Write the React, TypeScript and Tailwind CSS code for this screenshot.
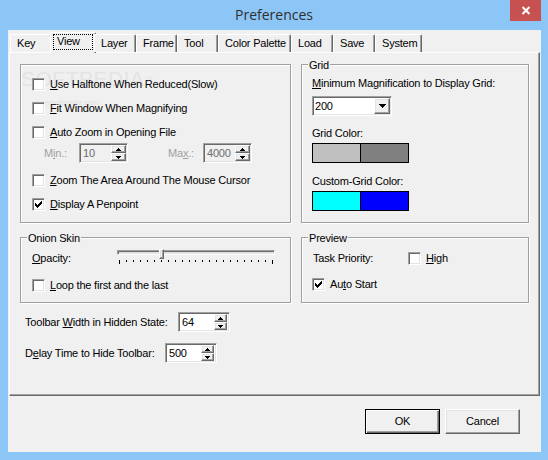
import React from 'react'

// classic win32 bevels
const raised = 'border border-t-white border-l-white border-r-[#696969] border-b-[#696969] shadow-[inset_-1px_-1px_0_#a0a0a0,inset_1px_1px_0_#e3e3e3]'
const sunken = 'border border-t-[#a0a0a0] border-l-[#a0a0a0] border-r-white border-b-white shadow-[inset_1px_1px_0_#696969,inset_-1px_-1px_0_#e3e3e3]'
const etched = 'relative border border-[#a0a0a0] shadow-[inset_1px_1px_0_#fff,1px_1px_0_#fff]'

const Check = ({ checked }: { checked?: boolean }) => (
    <span className={`w-[13px] h-[13px] shrink-0 bg-white flex items-center justify-center ${sunken}`}>
        {checked && (
            <svg width="7" height="7" viewBox="0 0 7 7" shapeRendering="crispEdges">
                <rect x="6" y="0" width="1" height="3" />
                <rect x="5" y="1" width="1" height="3" />
                <rect x="4" y="2" width="1" height="3" />
                <rect x="3" y="3" width="1" height="3" />
                <rect x="2" y="4" width="1" height="3" />
                <rect x="1" y="3" width="1" height="3" />
                <rect x="0" y="2" width="1" height="3" />
            </svg>
        )}
    </span>
)

const CheckRow = ({ label, checked, className }: { label: React.ReactNode, checked?: boolean, className?: string }) => (
    <div className={`flex items-center gap-[5px] ${className ?? ''}`}>
        <Check checked={checked} />
        <span className="whitespace-nowrap">{label}</span>
    </div>
)

const Arrow = ({ dir }: { dir: 'up' | 'down' }) => (
    <svg width="5" height="3" viewBox="0 0 5 3" shapeRendering="crispEdges">
        {dir === 'up' ? (
            <>
                <rect x="2" y="0" width="1" height="1" />
                <rect x="1" y="1" width="3" height="1" />
                <rect x="0" y="2" width="5" height="1" />
            </>
        ) : (
            <>
                <rect x="0" y="0" width="5" height="1" />
                <rect x="1" y="1" width="3" height="1" />
                <rect x="2" y="2" width="1" height="1" />
            </>
        )}
    </svg>
)

const SpinBox = ({ value, w, disabled, flush }: { value: string, w: string, disabled?: boolean, flush?: boolean }) => (
    <div className={`${w} h-[20px] shrink-0 flex p-[1px] ${sunken} ${disabled ? 'bg-[#f0f0f0] text-[#6d6d6d]' : 'bg-white'}`}>
        <span className="flex-1 pl-[2px] flex items-center">{value}</span>
        <div className={`flex flex-col ${flush ? 'w-[15px]' : 'w-[13px] mr-[1px]'}`}>
            <span className={`flex-1 flex items-center justify-center bg-[#f0f0f0] ${raised}`}><Arrow dir="up" /></span>
            <span className={`flex-1 flex items-center justify-center bg-[#f0f0f0] ${raised}`}><Arrow dir="down" /></span>
        </div>
    </div>
)

const Slider = () => (
    <div className="relative w-[158px] h-[17px]">
        <div className={`mt-[2px] h-[5px] bg-[#e3e3e3] ${sunken}`} />
        <div className="mt-[5px] px-[2px] flex justify-between items-start">
            {Array.from({ length: 23 }).map((_, i) => (
                <span key={i} className={`w-[1px] bg-black ${i === 0 || i === 22 ? 'h-[4px]' : 'h-[2px]'}`} />
            ))}
        </div>
        {/* thumb */}
        <div className={`absolute left-[42px] top-[1px] w-[5px] h-[10px] bg-[#f0f0f0] ${raised}`} />
    </div>
)

const Swatch = ({ a, b }: { a: string, b: string }) => (
    <div className="mt-[3px] flex w-[97px] h-[20px] border border-black">
        <span className={`flex-1 ${a}`} />
        <span className={`flex-1 border-l border-black ${b}`} />
    </div>
)

const tabs = [
    { label: 'Key', w: 'w-[42px]' },
    { label: 'View', w: 'w-[46px]', active: true },
    { label: 'Layer', w: 'w-[42px]' },
    { label: 'Frame', w: 'w-[41px]' },
    { label: 'Tool', w: 'w-[41px]' },
    { label: 'Color Palette', w: 'w-[73px]' },
    { label: 'Load', w: 'w-[42px]' },
    { label: 'Save', w: 'w-[42px]' },
    { label: 'System', w: 'w-[47px]' },
]

const Legend = ({ children }: { children: React.ReactNode }) => (
    <span className="absolute left-[6px] top-[-6px] bg-[#f0f0f0] px-[1px] leading-[13px]">{children}</span>
)

export default function App() {
    return (
        <div className="w-[548px] h-[460px] bg-[#8cc6f6] flex flex-col font-['Liberation_Sans',Arial,sans-serif] text-[11px] leading-[13px] tracking-[-0.2px] text-black">
            {/* title bar */}
            <div className="h-[30px] grid grid-cols-[1fr_auto_1fr]">
                <span />
                <span className="self-center font-['Open_Sans','Noto_Sans',sans-serif] text-[14px] leading-[20px] tracking-normal text-[#2e2e2e]">Preferences</span>
                <div className="justify-self-end mr-[7px] w-[31px] h-[21px] bg-[#c75050] flex items-center justify-center">
                    <svg width="10" height="9" viewBox="0 0 10 9">
                        <path d="M1.5 1 L8.5 8 M8.5 1 L1.5 8" stroke="#fff" strokeWidth="2" />
                    </svg>
                </div>
            </div>

            {/* client area */}
            <div className="ml-[8px] w-[533px] h-[422px] bg-[#f0f0f0] flex flex-col">
                {/* tab strip */}
                <div className="relative z-10 mt-[2px] h-[20px] pl-[2px] flex items-end">
                    {tabs.map(t => t.active ? (
                        <div key={t.label} className={`${t.w} h-[21px] -mb-[1px] -mx-[2px] bg-[#f0f0f0] border-l border-t border-r border-t-white border-l-white border-r-[#696969] shadow-[inset_-1px_0_0_#a0a0a0] rounded-tr-[2px]`}>
                            <div className="mt-[1px] mx-[2px] h-[16px] border border-dotted border-black pl-[3px] leading-[12px]">{t.label}</div>
                        </div>
                    ) : (
                        <div key={t.label} className={`${t.w} h-[18px] pl-[6px] flex items-center whitespace-nowrap bg-[#f0f0f0] border-l border-t border-r border-t-white border-l-white border-r-[#696969] shadow-[inset_-1px_0_0_#a0a0a0] rounded-tr-[2px]`}>
                            {t.label}
                        </div>
                    ))}
                </div>

                {/* tab panel */}
                <div className="ml-[1px] w-[531px] h-[344px] px-[10px] flex flex-col border border-t-white border-l-white border-r-[#696969] border-b-[#696969] shadow-[inset_-1px_-1px_0_#a0a0a0]">
                    <div className="mt-[11px] flex gap-[10px]">
                        {/* view options */}
                        <div className={`w-[271px] h-[159px] pl-[11px] pt-[7px] ${etched}`}>
                            <span className="absolute left-[0px] top-[4px] text-[21px] leading-[20px] tracking-[0.5px] text-[#e4e4e4] select-none">SOFTPEDIA<sup className="text-[8px]">™</sup></span>
                            <span className="absolute left-[12px] top-[34px] text-[8px] leading-[8px] text-[#e2e2e2]">www.softpedia.com</span>
                            <CheckRow className="relative h-[24px]" label={<><u>U</u>se Halftone When Reduced(Slow)</>} />
                            <CheckRow className="relative h-[24px]" label={<><u>F</u>it Window When Magnifying</>} />
                            <CheckRow className="h-[24px]" label={<><u>A</u>uto Zoom in Opening File</>} />
                            <div className="h-[20px] -mt-[1px] mb-[5px] flex items-center">
                                <span className="ml-[12px] w-[35px] text-[#a0a0a0]">M<u>i</u>n.:</span>
                                <SpinBox value="10" w="w-[49px]" disabled flush />
                                <span className="ml-[40px] w-[35px] text-[#a0a0a0]">Ma<u>x</u>.:</span>
                                <SpinBox value="4000" w="w-[49px]" disabled flush />
                            </div>
                            <CheckRow className="h-[24px]" label={<><u>Z</u>oom The Area Around The Mouse Cursor</>} />
                            <CheckRow className="h-[24px]" checked label={<><u>D</u>isplay A Penpoint</>} />
                        </div>

                        {/* grid */}
                        <div className={`w-[228px] h-[159px] pl-[10px] pt-[12px] ${etched}`}>
                            <Legend>Grid</Legend>
                            <div><u>M</u>inimum Magnification to Display Grid:</div>
                            <div className={`mt-[6px] w-[80px] h-[20px] bg-white flex p-[1px] ${sunken}`}>
                                <span className="flex-1 pl-[1px] flex items-center">200</span>
                                <span className={`w-[16px] h-full flex items-center justify-center bg-[#f0f0f0] ${raised}`}>
                                    <svg width="7" height="4" viewBox="0 0 7 4" shapeRendering="crispEdges">
                                        <rect x="0" y="0" width="7" height="1" />
                                        <rect x="1" y="1" width="5" height="1" />
                                        <rect x="2" y="2" width="3" height="1" />
                                        <rect x="3" y="3" width="1" height="1" />
                                    </svg>
                                </span>
                            </div>
                            <div className="mt-[11px]">Grid Color:</div>
                            <Swatch a="bg-[#c0c0c0]" b="bg-[#808080]" />
                            <div className="mt-[12px]">Custom-Grid Color:</div>
                            <Swatch a="bg-[#00ffff]" b="bg-[#0000ff]" />
                        </div>
                    </div>

                    <div className="mt-[14px] flex gap-[10px]">
                        {/* onion skin */}
                        <div className={`w-[271px] h-[66px] pl-[11px] pt-[10px] ${etched}`}>
                            <Legend>Onion Skin</Legend>
                            <div className="flex items-start">
                                <span className="mt-[4px] w-[85px]"><u>O</u>pacity:</span>
                                <Slider />
                            </div>
                            <CheckRow className="mt-[14px] h-[13px]" label={<><u>L</u>oop the first and the last</>} />
                        </div>

                        {/* preview */}
                        <div className={`w-[228px] h-[66px] pl-[10px] pt-[14px] ${etched}`}>
                            <Legend>Preview</Legend>
                            <div className="h-[13px] flex items-center">
                                <span className="w-[96px] pl-[1px]">Task Priority:</span>
                                <CheckRow label={<><u>H</u>igh</>} />
                            </div>
                            <CheckRow className="mt-[13px] h-[13px]" checked label={<>Au<u>t</u>o Start</>} />
                        </div>
                    </div>

                    <div className="mt-[9px] ml-[5px] h-[20px] flex items-center">
                        <span className="w-[153px]">Toolbar <u>W</u>idth in Hidden State:</span>
                        <SpinBox value="64" w="w-[52px]" />
                    </div>
                    <div className="mt-[11px] ml-[5px] h-[20px] flex items-center">
                        <span className="w-[140px]">D<u>e</u>lay Time to Hide Toolbar:</span>
                        <SpinBox value="500" w="w-[52px]" />
                    </div>
                </div>

                {/* dialog buttons */}
                <div className="mt-[13px] mr-[21px] flex justify-end gap-[5px]">
                    <button className="w-[75px] h-[25px] bg-[#f0f0f0] border border-black shadow-[inset_1px_1px_0_#fff,inset_-1px_-1px_0_#696969,inset_-2px_-2px_0_#a0a0a0]">OK</button>
                    <button className={`w-[75px] h-[25px] bg-[#f0f0f0] ${raised}`}>Cancel</button>
                </div>
            </div>
        </div>
    )
}
